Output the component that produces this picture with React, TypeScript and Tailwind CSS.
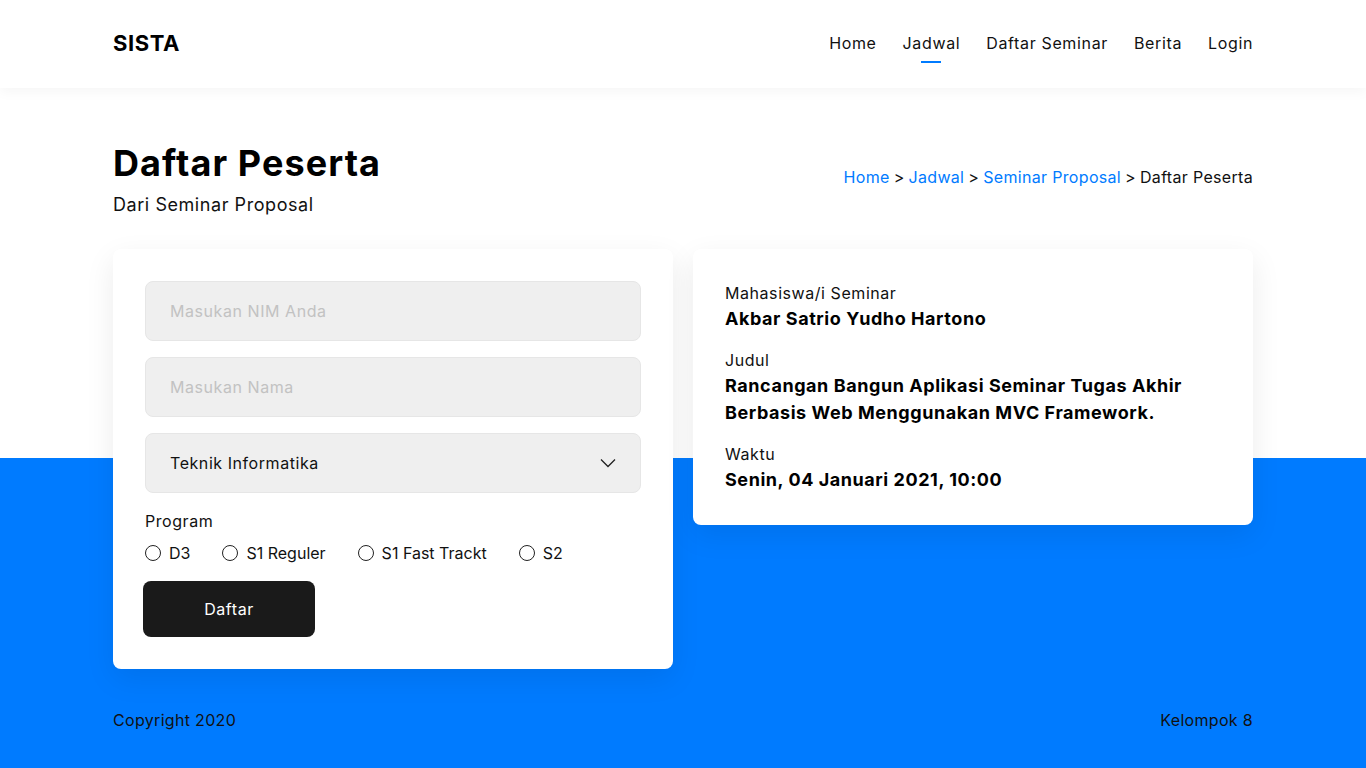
import React from "react";

const font = { fontFamily: "Inter, 'Open Sans', sans-serif" };

function Radio({ label }: { label: string }) {
  return (
    <label className="flex items-center mr-8">
      <span className="w-4 h-4 rounded-full border border-[#222] bg-white inline-block" />
      <span className="ml-2 text-base leading-6 text-[#111] tracking-normal">{label}</span>
    </label>
  );
}

export default function App() {
  return (
    <div className="min-h-screen bg-[#007bff] text-[#111] tracking-[0.035em]" style={font}>
      <header className="h-[88px] bg-white relative z-10 shadow-[0_4px_12px_rgba(0,0,0,0.04)]">
        <div className="w-[1140px] mx-auto h-full flex items-center justify-between pb-[2px]">
          <div className="text-[22px] font-bold tracking-wide text-black">SISTA</div>
          <nav className="flex items-center gap-[26px] text-base text-[#111] tracking-[0.04em]">
            <a className="leading-6">Home</a>
            <a className="leading-6 relative">
              Jadwal
              <span className="absolute left-1/2 -translate-x-1/2 top-[30px] w-5 h-[2px] bg-[#007bff]" />
            </a>
            <a className="leading-6">Daftar Seminar</a>
            <a className="leading-6">Berita</a>
            <a className="leading-6">Login</a>
          </nav>
        </div>
      </header>

      <section className="bg-[linear-gradient(to_bottom,#ffffff_370px,#007bff_370px)] pt-[54px]">
        <div className="w-[1140px] mx-auto">
          <div className="flex items-center justify-between">
            <div>
              <h1 className="text-[36px] leading-[43px] font-bold text-black tracking-[0.03em]">Daftar Peserta</h1>
              <p className="mt-[6px] text-[18px] leading-[27px] text-[#111]">Dari Seminar Proposal</p>
            </div>
            <div className="text-base leading-6 -mt-[6px] tracking-[0.02em]">
              <span className="text-[#007bff]">Home</span>
              <span className="mx-1">&gt;</span>
              <span className="text-[#007bff]">Jadwal</span>
              <span className="mx-1">&gt;</span>
              <span className="text-[#007bff]">Seminar Proposal</span>
              <span className="mx-1">&gt;</span>
              <span>Daftar Peserta</span>
            </div>
          </div>

          <div className="mt-[31px] flex items-start gap-5">
            <div className="w-[560px] bg-white rounded-lg shadow-[0_10px_30px_rgba(0,0,0,0.08)] p-8">
              <div className="flex flex-col gap-4">
                <div className="h-[60px] rounded-lg bg-[#efefef] border border-[#e6e6e6] flex items-center px-6 text-base text-[#c2c2c2]">
                  Masukan NIM Anda
                </div>
                <div className="h-[60px] rounded-lg bg-[#efefef] border border-[#e6e6e6] flex items-center px-6 text-base text-[#c2c2c2]">
                  Masukan Nama
                </div>
                <div className="h-[60px] rounded-lg bg-[#efefef] border border-[#e6e6e6] flex items-center justify-between pl-6 pr-6 text-base text-[#111]">
                  <span>Teknik Informatika</span>
                  <svg width="16" height="10" viewBox="0 0 16 10" fill="none">
                    <path d="M1 1.5 L8 8.5 L15 1.5" stroke="#222" strokeWidth="1.3" />
                  </svg>
                </div>
              </div>
              <div className="mt-4 text-base leading-6">Program</div>
              <div className="mt-2 flex items-center">
                <Radio label="D3" />
                <Radio label="S1 Reguler" />
                <Radio label="S1 Fast Trackt" />
                <Radio label="S2" />
              </div>
              <button className="mt-4 -ml-0.5 w-[172px] h-14 rounded-lg bg-[#1a1a1a] text-white text-base">
                Daftar
              </button>
            </div>

            <div className="w-[560px] bg-white rounded-lg shadow-[0_10px_30px_rgba(0,0,0,0.08)] p-8">
              <div className="text-base leading-6">Mahasiswa/i Seminar</div>
              <div className="text-[18px] leading-[27px] font-bold text-black">Akbar Satrio Yudho Hartono</div>
              <div className="mt-4 text-base leading-6">Judul</div>
              <div className="text-[18px] leading-[27px] font-bold text-black pr-8">
                Rancangan Bangun Aplikasi Seminar Tugas Akhir Berbasis Web Menggunakan MVC Framework.
              </div>
              <div className="mt-4 text-base leading-6">Waktu</div>
              <div className="text-[18px] leading-[27px] font-bold text-black">Senin, 04 Januari 2021, 10:00</div>
            </div>
          </div>
        </div>
      </section>

      <footer className="w-[1140px] mx-auto flex items-center justify-between pt-[39px] pb-9 text-base leading-6 text-[#111] tracking-[0.02em]">
        <span>Copyright 2020</span>
        <span>Kelompok 8</span>
      </footer>
    </div>
  );
}
